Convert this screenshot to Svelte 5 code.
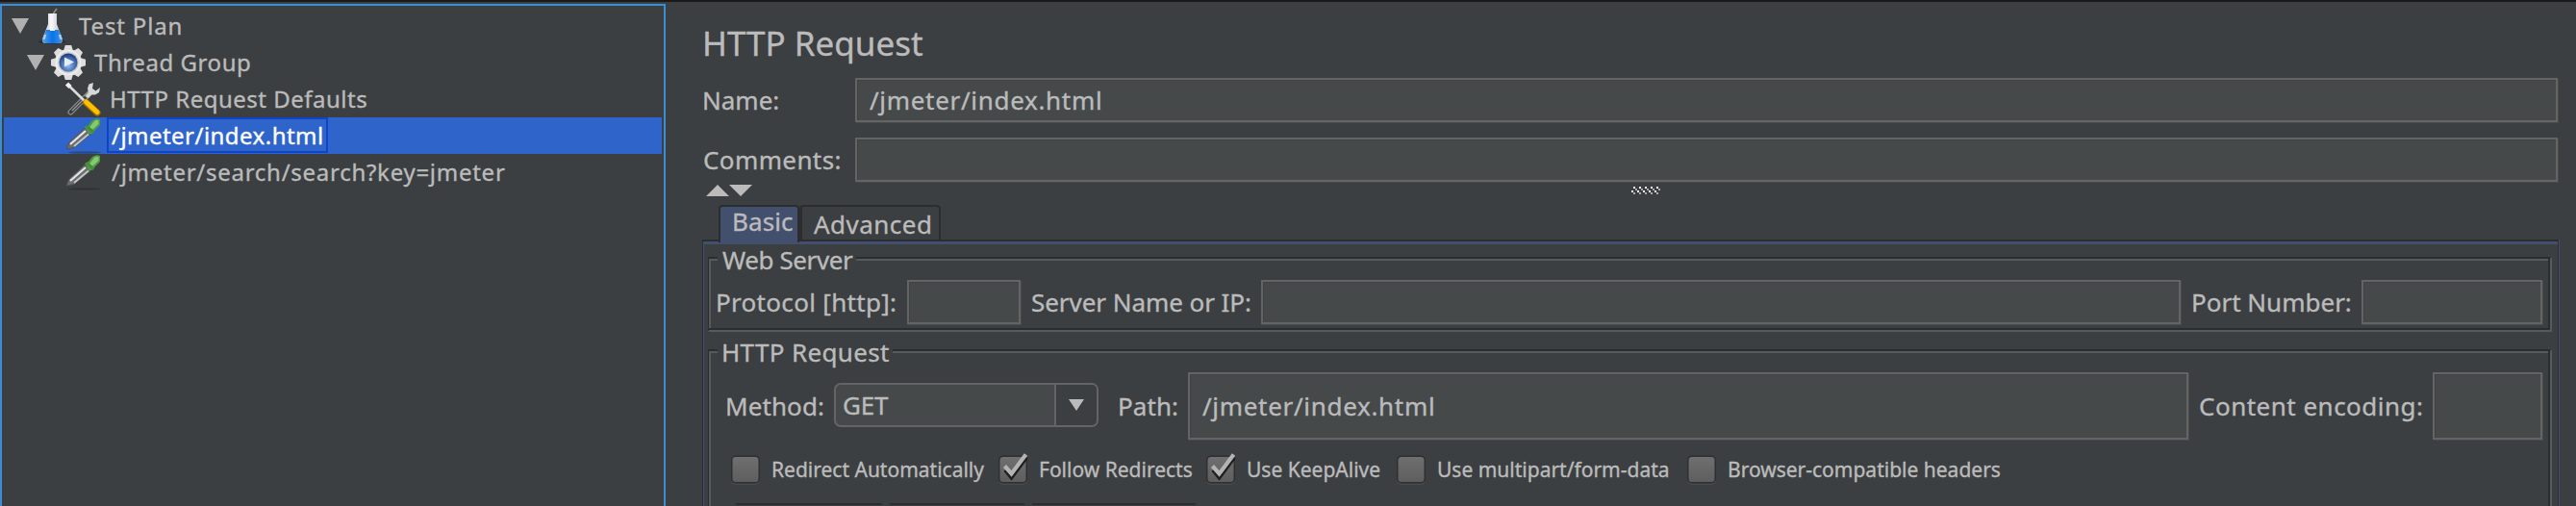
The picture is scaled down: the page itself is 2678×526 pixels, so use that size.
<script>
  const tree = [
    { label: 'Test Plan', depth: 0, icon: 'flask', open: true, tracking: 0.84 },
    { label: 'Thread Group', depth: 1, icon: 'gear', open: true, tracking: 0.56 },
    { label: 'HTTP Request Defaults', depth: 2, icon: 'tools', tracking: 0.5 },
    { label: '/jmeter/index.html', depth: 2, icon: 'dropper', selected: true, tracking: 0.47 },
    { label: '/jmeter/search/search?key=jmeter', depth: 2, icon: 'dropper', tracking: 0.73 }
  ];

  const options = [
    { label: 'Redirect Automatically', checked: false, width: 278 },
    { label: 'Follow Redirects', checked: true, width: 216 },
    { label: 'Use KeepAlive', checked: true, width: 198 },
    { label: 'Use multipart/form-data', checked: false, width: 302 },
    { label: 'Browser-compatible headers', checked: false, width: 330 }
  ];

  const teeth = [0, 45, 90, 135, 180, 225, 270, 315];
  const grip = [0, 6, 12, 18, 24];
</script>

{#snippet icon(name)}
  <svg class="icon" viewBox="0 0 36 38" aria-hidden="true">
    {#if name === 'flask'}
      <ellipse cx="18" cy="35.5" rx="14" ry="2" fill="#2a2c2e" />
      <path d="M19.500 6 L23 1" stroke="#8d9092" stroke-width="1.6" />
      <path d="M14 6 H23 V17 L29 33 Q29.500 37 25.500 37 H11.500 Q7.500 37 8 33 L14 17 Z" fill="url(#glass)" />
      <path d="M11.500 24 H25.500 L29 33 Q29.500 37 25.500 37 H11.500 Q7.500 37 8 33 Z" fill="url(#liquid)" />
      <path d="M12 24 h4 M21 24 h4" stroke="#2b7fd6" stroke-width="2" />
      <path d="M16.500 7 V23" stroke="#fff" stroke-width="2" opacity=".6" />
      <path d="M11 28 L9.500 33 M26 28 L27.500 33" stroke="#a9ccf0" stroke-width="2.500" />
    {:else if name === 'gear'}
      <g transform="translate(19 19)">
        {#each teeth as a}
          <path d="M-5 -12 L-3.200 -18 H3.200 L5 -12 Z" transform="rotate({a})" fill="#dedede" />
        {/each}
        <circle r="14" fill="#dedede" />
        <circle r="12.500" fill="none" stroke="#efefef" stroke-width="1.500" />
        <circle r="10.500" fill="#bfc1c6" />
        <circle r="9.500" fill="url(#orb)" />
        <path d="M-4 -5.500 L6 -.5 L-4 4.500 Z" fill="#e6edf8" />
      </g>
    {:else if name === 'tools'}
      <path d="M5.500 32.500 L25 13" stroke="#8e9090" stroke-width="6" stroke-linecap="round" />
      <path d="M5.500 32.500 L20 18" stroke="#3a3c3d" stroke-width="3.800" stroke-linecap="round" />
      <path d="M7 31 L19 19" stroke="#9a9c9c" stroke-width="1.200" />
      <path d="M29 2 L24.500 3.500 L23 8 L24 12 L21 16 L24 18 L27 14.500 L31 14.500 L35 12 L36 7 L31.500 10.500 L28 8 Z" fill="#d6d8d8" />
      <path d="M2.500 4 L21 22" stroke="#d9dcdc" stroke-width="2.600" />
      <path d="M1.500 3 L5 6.500" stroke="#eee" stroke-width="4.500" />
      <path d="M21.500 22.500 L33 33" stroke="#a87400" stroke-width="7" stroke-linecap="round" />
      <path d="M21.500 22 L33 32.500" stroke="#fcc200" stroke-width="5" stroke-linecap="round" />
    {:else}
      <ellipse cx="20" cy="36.500" rx="17" ry="1.300" fill="#222" opacity=".4" />
      <path d="M1 33 L4 26 L20 11.500 L26 17.500 L9 31.500 Z" fill="#6a6d6f" stroke="#505355" stroke-width="1" />
      <path d="M5 28 L21 14" stroke="#e6e6e6" stroke-width="2.200" />
      <path d="M9 30 L24 17.500" stroke="#c4c6c6" stroke-width="1.800" />
      <path d="M20 10 L24 8 L28 3 Q32 0 36 2 V8 L31 13 L29 16.500 L24.500 17.500 Z" fill="#4f9a43" />
      <path d="M25 10.500 L30 4 Q33 2 34.500 3.500 L34.500 7 L28.500 12.500 Z" fill="#86c973" />
      <path d="M22 9 L29 15.500" stroke="#438c3a" stroke-width="2.500" />
    {/if}
  </svg>
{/snippet}

<svg class="defs" width="0" height="0" aria-hidden="true">
  <defs>
    <linearGradient id="glass"><stop offset="0" stop-color="#b9c4cf" /><stop offset=".5" stop-color="#f2f4f6" /><stop offset="1" stop-color="#a9b3bd" /></linearGradient>
    <linearGradient id="liquid"><stop offset="0" stop-color="#5d9fe2" /><stop offset=".5" stop-color="#0574ea" /><stop offset="1" stop-color="#4d90dc" /></linearGradient>
    <radialGradient id="orb" cx=".5" cy=".65" r=".6"><stop offset="0" stop-color="#9fc0ec" /><stop offset=".55" stop-color="#4c78ba" /><stop offset="1" stop-color="#233f80" /></radialGradient>
    <linearGradient id="box" x2="0" y2="1"><stop offset="0" stop-color="#6f6f6f" /><stop offset="1" stop-color="#5e5e5e" /></linearGradient>
  </defs>
</svg>

<div class="window">
  <nav class="tree">
    {#each tree as node}
      <div class="node d{node.depth}" class:selected={node.selected}>
        <span class="toggle">
          {#if node.open}
            <svg width="18" height="16" viewBox="0 0 18 16"><path d="M0 0 H18 L9 16 Z" fill="#b0b0b0" /></svg>
          {/if}
        </span>
        {@render icon(node.icon)}
        <span class="label" class:request-label={node.icon === 'dropper'} style="letter-spacing: {node.tracking}px">{node.label}</span>
      </div>
    {/each}
  </nav>

  <main>
    <h1>HTTP Request</h1>
    <div class="form-row">
      <span>Name:</span>
      <div class="field wide-text">/jmeter/index.html</div>
    </div>
    <div class="form-row second">
      <span class="comments">Comments:</span>
      <div class="field"></div>
    </div>

    <div class="splitter">
      <svg width="50" height="12" viewBox="0 0 50 12"><path d="M0 12 L12 0 L24 12 Z M24 0 H48 L36 12 Z" fill="#bbb" /></svg>
      <svg class="grip" width="30" height="8" viewBox="0 0 30 8" shape-rendering="crispEdges">
        {#each grip as x}
          <path d="M{x + 2} 0 h2 v2 h-2 Z M{x} 4 h2 v2 h-2 Z" fill="#fff" />
          <path d="M{x + 4} 2 h2 v2 h-2 Z M{x + 2} 6 h2 v2 h-2 Z" fill="#aaa" />
        {/each}
      </svg>
    </div>

    <div class="tabs">
      <div class="tab active">Basic</div>
      <div class="tab plain">Advanced</div>
    </div>

    <section class="pane">
      <div class="group server">
        <div class="legend">Web Server</div>
        <div class="server-row">
          <span class="protocol">Protocol [http]:</span>
          <div class="field"></div>
          <span class="host">Server Name or IP:</span>
          <div class="field"></div>
          <span class="port">Port Number:</span>
          <div class="field"></div>
        </div>
      </div>

      <div class="group request">
        <div class="legend http">HTTP Request</div>
        <div class="request-row">
          <span class="method">Method:</span>
          <div class="combo">
            <span>GET</span>
            <i><svg width="16" height="12" viewBox="0 0 16 12"><path d="M0 0 H16 L8 12 Z" fill="#bbb" /></svg></i>
          </div>
          <span class="path">Path:</span>
          <div class="field tall wide-text">/jmeter/index.html</div>
          <span class="encoding">Content encoding:</span>
          <div class="field tall"></div>
        </div>
        <div class="options">
          {#each options as o}
            <div class="option" style="width: {o.width}px">
              <svg width="32" height="36" viewBox="0 0 32 36">
                <rect x="1" y="5" width="30" height="29" rx="5" fill="#484b4d" />
                <rect x="1" y="3.500" width="30" height="29" rx="5" fill="#2d2f30" />
                <rect x="2.500" y="5" width="27" height="26" rx="3.500" fill="url(#box)" />
                {#if o.checked}
                  <path d="M8 18.500 L14.500 26.500 L30 5.500" fill="none" stroke="#1e1e1e" stroke-width="4" />
                  <path d="M7.500 14.500 L14.500 22.500 L29.500 2.500" fill="none" stroke="#b4b4b4" stroke-width="4.200" />
                {/if}
              </svg>
              <span>{o.label}</span>
            </div>
          {/each}
        </div>
        <div class="subtabs"><b></b><b></b><b></b></div>
      </div>
    </section>
  </main>
</div>

<style>
  :global(body) { background: #3c3f41; overflow: hidden; }
  .defs { display: block; }
  .window {
    box-sizing: border-box;
    display: flex;
    width: 2678px;
    height: 526px;
    overflow: hidden;
    border-top: 2px solid #19191b;
    background: #3c3f41;
    color: #bbb;
    font: 26px "Noto Sans", "Open Sans", sans-serif;
    white-space: nowrap;
    -webkit-text-stroke: .35px currentColor;
  }
  .tree {
    box-sizing: border-box;
    flex: none;
    width: 692px;
    height: 540px;
    margin-top: 2px;
    padding: 2px 2px 0;
    border: 2px solid #3d8ed0;
    font-size: 24px;
  }
  .node { display: flex; align-items: center; height: 38px; }
  .d0 { padding-left: 8px; }
  .d1 { padding-left: 24px; }
  .d2 { padding-left: 40px; }
  .toggle { display: flex; width: 24px; }
  .icon { flex: none; width: 36px; height: 38px; margin-right: 10px; overflow: visible; }
  .label { line-height: 38px; }
  .request-label { padding-left: 2px; }
  .selected { background: #2f65ca; color: #fff; }
  .selected .label {
    box-sizing: border-box;
    width: 230px;
    height: 37px;
    margin: 0 0 1px -3px;
    padding-left: 3px;
    border: 2px solid #0c45cb;
    line-height: 34px;
  }

  main { flex: 1; min-width: 0; padding: 21px 18px 0 38px; }
  h1 { margin: 0 0 15px; font-size: 35px; line-height: 43px; font-weight: 400; }
  .form-row { display: grid; grid-template-columns: 159px 1fr; height: 46px; margin-right: 1px; line-height: 46px; }
  .form-row > .comments { padding-left: 1px; letter-spacing: .39px; }
  .second { margin-top: 16px; }
  .field {
    box-sizing: border-box;
    height: 46px;
    padding-left: 13px;
    border: 2px solid #646464;
    background: #45494a;
    box-shadow: inset 1px 1px #3f4244, 1px 1px #484b4d;
    line-height: 42px;
  }
  .wide-text { letter-spacing: .69px; }
  .tall { height: 70px; line-height: 66px; }

  .splitter { box-sizing: border-box; display: flex; gap: 912px; height: 24px; padding: 3px 0 0 4px; }
  .splitter svg { flex: none; }
  .grip { margin-top: 2px; }

  .tabs { display: flex; height: 36px; padding-left: 17px; }
  .tab { box-sizing: border-box; height: 36px; border: 2px solid #2b2d2e; border-bottom: 0; border-radius: 4px 4px 0 0; }
  .active {
    z-index: 1;
    width: 84px;
    height: 39px;
    padding-left: 12px;
    background: #42506e;
    line-height: 30px;
    letter-spacing: .09px;
  }
  .plain { width: 146px; margin-left: 1px; padding-left: 12px; box-shadow: -1px 0 #2b2d2e; line-height: 37px; letter-spacing: .48px; }

  .pane {
    box-sizing: border-box;
    height: 300px;
    padding: 16px 6px 0 5px;
    border: 1px solid #2b2d2e;
    border-top-width: 2px;
    box-shadow: inset 1px 3px #42506e, 1px 0 #42506e;
  }
  .group {
    box-sizing: border-box;
    border: 2px solid;
    border-color: #2b2d2e #555a5c #555a5c #2b2d2e;
    border-left-width: 1px;
    box-shadow: inset -2px -2px #2b2d2e, inset 2px 2px #555a5c;
  }
  .legend { width: 144px; height: 22px; margin: -3px 0 0 9px; padding-left: 5px; box-sizing: border-box; background: #3c3f41; line-height: 8px; letter-spacing: -.4px; }
  .server { height: 78px; }
  .server-row { display: grid; grid-template-columns: 200px 118px 250px 1fr 188px 188px; margin-top: 3px; padding: 0 8px 0 6px; line-height: 46px; }
  .protocol { padding-left: 1px; letter-spacing: .31px; }
  .host { padding-left: 11px; letter-spacing: -.05px; }
  .port { padding-left: 11px; }
  .request { height: 300px; margin-top: 18px; }
  .http { width: 182px; padding-left: 4px; letter-spacing: .35px; }
  .request-row { display: grid; grid-template-columns: 114px 275px 93px 1fr 254px 114px; align-items: center; margin-top: 3px; padding: 0 8px 0 16px; line-height: 70px; }
  .method { padding-left: 1px; letter-spacing: .1px; }
  .path { padding-left: 20px; letter-spacing: .06px; }
  .encoding { padding-left: 11px; letter-spacing: .49px; }
  .combo {
    box-sizing: border-box;
    display: flex;
    justify-content: space-between;
    height: 46px;
    margin-bottom: 3px;
    overflow: hidden;
    border: 2px solid #646464;
    border-radius: 7px;
    background: #45494a;
    line-height: 42px;
  }
  .combo > span { padding-left: 7px; letter-spacing: -.19px; }
  .combo > i { display: flex; align-items: center; justify-content: center; width: 42px; border-left: 2px solid #646464; background: #3c3f41; }
  .options { display: flex; height: 36px; margin-top: 13px; padding-left: 22px; font-size: 21px; line-height: 36px; }
  .option { display: flex; gap: 11px; }
  .option svg { flex: none; }
  .subtabs { display: flex; gap: 8px; margin: 17px 0 0 28px; }
  .subtabs b { width: 152px; height: 2px; background: #2b2d2e; }
  .subtabs b:nth-child(2) { width: 140px; }
  .subtabs b:nth-child(3) { width: 170px; }
</style>
